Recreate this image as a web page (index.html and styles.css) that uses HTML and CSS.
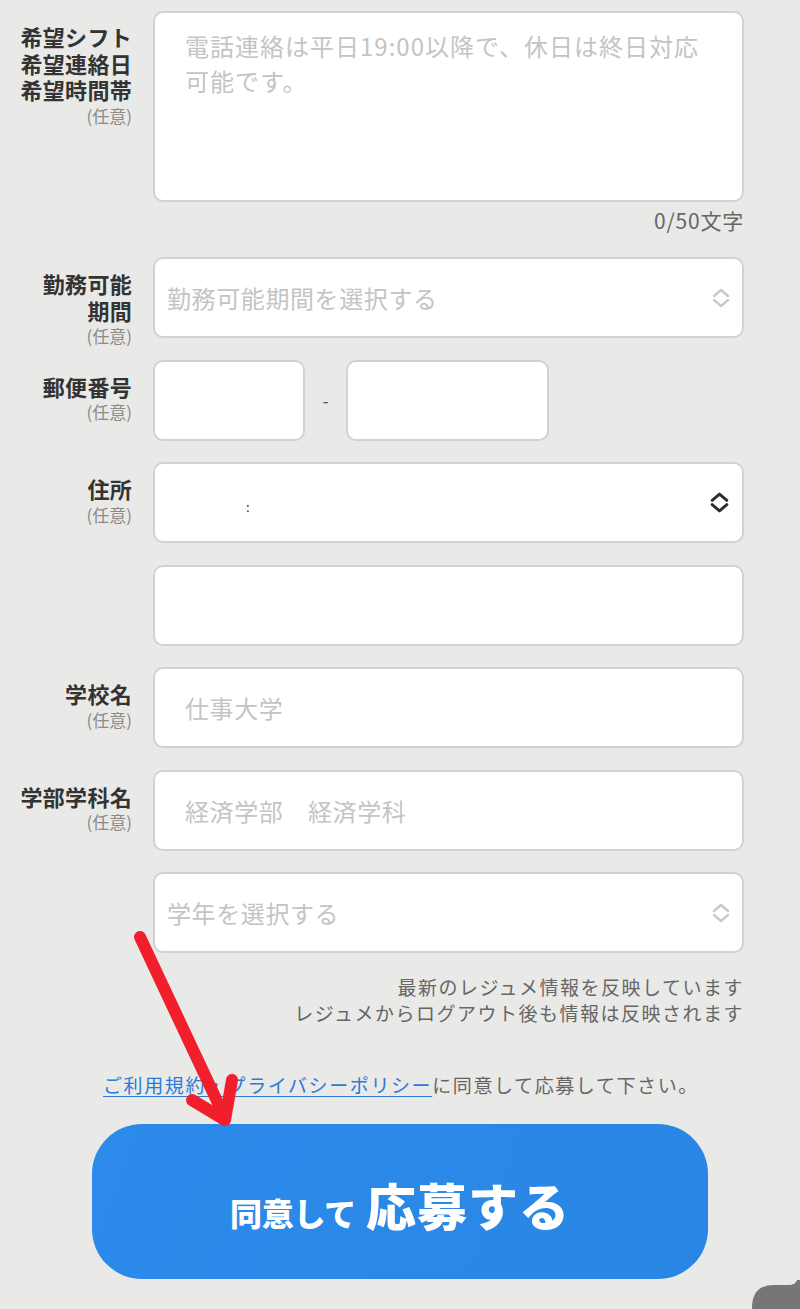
FILE: index.html
```html
<!DOCTYPE html>
<html lang="ja">
<head>
<meta charset="utf-8">
<title>応募フォーム</title>
<link rel="stylesheet" href="styles.css">
</head>
<body>
<main class="form">
  <div class="row">
    <div class="label label-first"><span class="name">希望シフト<br>希望連絡日<br>希望時間帯</span><span class="opt">(任意)</span></div>
    <div class="field">
      <div class="box textarea"><span class="ph">電話連絡は平日19:00以降で、休日は終日対応<br>可能です。</span></div>
      <div class="counter">0/50文字</div>
    </div>
  </div>

  <div class="row">
    <div class="label"><span class="name">勤務可能<br>期間</span><span class="opt">(任意)</span></div>
    <div class="box select"><span class="ph">勤務可能期間を選択する</span>
      <svg class="chev" viewBox="0 0 18 20" width="18" height="20"><polyline points="2,8 9,2 16,8"/><polyline points="2,12 9,18 16,12"/></svg>
    </div>
  </div>

  <div class="row">
    <div class="label"><span class="name">郵便番号</span><span class="opt">(任意)</span></div>
    <div class="zip">
      <div class="box zip1"></div>
      <span class="dash">-</span>
      <div class="box zip2"></div>
    </div>
  </div>

  <div class="row">
    <div class="label"><span class="name">住所</span><span class="opt">(任意)</span></div>
    <div class="box select"><span class="colon">:</span>
      <svg class="chev chev-dark" viewBox="0 0 18 20" width="19" height="21"><polyline points="2,8 9,2 16,8"/><polyline points="2,12 9,18 16,12"/></svg>
    </div>
  </div>

  <div class="row">
    <div class="label"></div>
    <div class="box input"></div>
  </div>

  <div class="row">
    <div class="label"><span class="name">学校名</span><span class="opt">(任意)</span></div>
    <div class="box input"><span class="ph">仕事大学</span></div>
  </div>

  <div class="row">
    <div class="label"><span class="name">学部学科名</span><span class="opt">(任意)</span></div>
    <div class="box input"><span class="ph">経済学部　経済学科</span></div>
  </div>

  <div class="row">
    <div class="label"></div>
    <div class="box select"><span class="ph">学年を選択する</span>
      <svg class="chev" viewBox="0 0 18 20" width="18" height="20"><polyline points="2,8 9,2 16,8"/><polyline points="2,12 9,18 16,12"/></svg>
    </div>
  </div>
</main>

<p class="note">最新のレジュメ情報を反映しています<br>レジュメからログアウト後も情報は反映されます</p>

<p class="terms"><a href="#" class="link">ご利用規約・プライバシーポリシー</a>に同意して応募して下さい。</p>

<button class="submit" type="button"><span class="s-wrap"><span class="s-small">同意して</span><span class="s-big">応募する</span></span></button>

<svg class="overlay" viewBox="0 0 800 1309" width="800" height="1309" aria-hidden="true">
  <path class="blob" d="M752,1309 L752,1308 Q752,1285 774,1285 L788,1285 Q796,1285 797,1280 L800,1280 L800,1309 Z"/>
  <g class="arrow">
    <line x1="140" y1="937" x2="225" y2="1118"/>
    <polyline points="192,1100 225,1120 232,1080"/>
  </g>
</svg>
</body>
</html>
```

FILE: styles.css
```css
html, body {
  margin: 0;
  padding: 0;
}
body {
  position: relative;
  width: 800px;
  height: 1309px;
  overflow: hidden;
  background: #e9e9e8;
  font-family: "Noto Sans CJK JP", "Noto Sans", sans-serif;
  color: #333;
}
.form {
  display: flex;
  flex-direction: column;
  gap: 21.5px;
  padding-top: 11px;
}
.row {
  display: grid;
  grid-template-columns: 132px 591px;
  column-gap: 21px;
  align-items: start;
}
.label {
  height: 0;
  overflow: visible;
  text-align: right;
  padding-top: 13px;
}
.label-first {
  padding-top: 12px;
}
.name {
  display: block;
  font-size: 22px;
  font-weight: 700;
  line-height: 26.5px;
  letter-spacing: 0.3px;
  color: #333;
}
.opt {
  display: block;
  font-size: 17px;
  line-height: 25px;
  color: #8a8a8a;
}
.box {
  box-sizing: border-box;
  height: 81px;
  background: #fff;
  border: 2px solid #d2d2d2;
  border-radius: 10px;
}
.ph {
  color: #c4c4c4;
  font-size: 24px;
  letter-spacing: 0.6px;
  white-space: nowrap;
}
.textarea {
  height: 191px;
  padding: 17px 30px;
  line-height: 32px;
}
.textarea .ph {
  letter-spacing: 1px;
}
.counter {
  text-align: right;
  font-size: 21px;
  line-height: 24px;
  letter-spacing: 0.8px;
  margin-top: 6px;
  padding-bottom: 3.5px;
  color: #666;
}
.select {
  display: flex;
  align-items: center;
  justify-content: space-between;
  padding: 0 12px;
}
.input {
  display: flex;
  align-items: center;
  padding: 0 30px;
}
.chev {
  fill: none;
  stroke: #c9c9c9;
  stroke-width: 2.4;
  stroke-linecap: round;
  stroke-linejoin: round;
  flex: none;
}
.chev-dark {
  stroke: #2f2f2f;
  stroke-width: 2.8;
  margin-right: 1px;
}
.colon {
  font-size: 13px;
  color: #333;
  margin-left: 79px;
  margin-top: 8px;
}
.zip {
  display: flex;
  align-items: center;
}
.zip1 {
  width: 152px;
}
.zip2 {
  width: 203px;
}
.dash {
  width: 41px;
  text-align: center;
  font-size: 18px;
  color: #555;
}
.note {
  width: 744px;
  margin: 21px 0 0;
  text-align: right;
  font-size: 19px;
  line-height: 26px;
  letter-spacing: 1.5px;
  color: #666;
}
.terms {
  margin: 46px 0 0;
  padding-left: 103px;
  font-size: 19px;
  line-height: 26px;
  letter-spacing: 1.6px;
  color: #666;
  white-space: nowrap;
}
.link {
  color: #2f7ad6;
  text-decoration: underline;
  text-underline-offset: 3px;
}
.submit {
  display: flex;
  align-items: center;
  justify-content: center;
  box-sizing: border-box;
  width: 616px;
  height: 155px;
  margin: 26px 0 0 92px;
  padding: 0;
  border: none;
  border-radius: 50px;
  background: linear-gradient(110deg, #2b8aea 0%, #2a86e4 100%);
  color: #fff;
  font-family: "Noto Sans CJK JP", sans-serif;
  font-weight: 900;
}
.s-wrap {
  display: block;
  line-height: 1;
  white-space: nowrap;
  margin-top: 4px;
}
.s-small {
  font-size: 32px;
  margin-right: 10px;
  letter-spacing: -0.3px;
}
.s-big {
  font-size: 50px;
  letter-spacing: 1px;
}
.overlay {
  position: absolute;
  left: 0;
  top: 0;
  pointer-events: none;
}
.blob {
  fill: #767676;
}
.arrow line,
.arrow polyline {
  fill: none;
  stroke: #f11f2c;
  stroke-width: 12;
  stroke-linecap: round;
  stroke-linejoin: round;
}
```
